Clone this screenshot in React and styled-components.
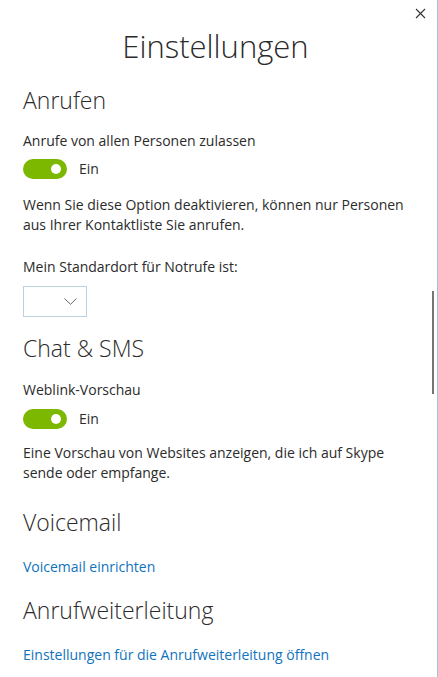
import React from "react";
import styled, { createGlobalStyle } from "styled-components";

const Global = createGlobalStyle`
  html, body { margin: 0; padding: 0; background: #fff; }
  body { font-family: "Open Sans", "Noto Sans", sans-serif; color: #2b2b2b; }
`;

const Window = styled.div`
  position: relative;
  width: 438px;
  height: 677px;
  box-sizing: border-box;
  border-right: 1px solid #a9c1d6;
  overflow: hidden;
  background: #fff;
`;

const Content = styled.div`
  display: flex;
  flex-direction: column;
  align-items: flex-start;
  padding: 26px 23px 0 23px;
`;

const Title = styled.h1`
  align-self: stretch;
  margin: 0;
  text-align: center;
  font-size: 31px;
  font-weight: 300;
  line-height: 40px;
  color: #2b2b2b;
  padding-right: 6px;
`;

const Heading = styled.h2`
  margin: ${(p) => p.$top}px 0 0 0;
  font-size: 23px;
  font-weight: 300;
  line-height: 32px;
  color: #2b2b2b;
`;

const Label = styled.div`
  margin-top: ${(p) => p.$top}px;
  font-size: 14px;
  line-height: 20px;
  color: #2b2b2b;
`;

const Paragraph = styled.p`
  margin: ${(p) => p.$top}px 0 0 0;
  font-size: 14px;
  line-height: 20px;
  color: #2b2b2b;
  max-width: 390px;
`;

const Link = styled.a`
  margin-top: ${(p) => p.$top}px;
  font-size: 14px;
  line-height: 20px;
  color: #0f73bd;
  text-decoration: none;
  cursor: pointer;
`;

const ToggleRow = styled.div`
  display: flex;
  align-items: center;
  gap: 12px;
  margin-top: ${(p) => p.$top}px;
  font-size: 14px;
  line-height: 20px;
`;

const Track = styled.span`
  display: flex;
  align-items: center;
  justify-content: flex-end;
  box-sizing: border-box;
  width: 44px;
  height: 20px;
  border-radius: 10px;
  background: #7db800;
  padding-right: 6px;
`;

const Knob = styled.span`
  width: 10px;
  height: 10px;
  border-radius: 50%;
  background: #fff;
`;

const Select = styled.div`
  display: flex;
  align-items: center;
  justify-content: flex-end;
  box-sizing: border-box;
  margin-top: ${(p) => p.$top}px;
  width: 64px;
  height: 31px;
  border: 1px solid #bdd0de;
  padding-right: 9px;
`;

const CloseButton = styled.button`
  position: absolute;
  top: 6px;
  right: 10px;
  width: 14px;
  height: 14px;
  padding: 0;
  border: 0;
  background: transparent;
  display: flex;
  align-items: center;
  justify-content: center;
`;

const Scrollbar = styled.div`
  position: absolute;
  right: 3px;
  top: 291px;
  width: 2px;
  height: 103px;
  background: #767676;
`;

const Toggle = () => (
  <Track>
    <Knob />
  </Track>
);

export default function App() {
  return (
    <Window>
      <Global />
      <CloseButton aria-label="Schließen">
        <svg width="11" height="11" viewBox="0 0 11 11">
          <path d="M1 1 L10 10 M10 1 L1 10" stroke="#333" strokeWidth="1.1" fill="none" />
        </svg>
      </CloseButton>
      <Scrollbar />
      <Content>
        <Title>Einstellungen</Title>

        <Heading $top={18}>Anrufen</Heading>
        <Label $top={15}>Anrufe von allen Personen zulassen</Label>
        <ToggleRow $top={8}>
          <Toggle />
          <span>Ein</span>
        </ToggleRow>
        <Paragraph $top={16}>
          Wenn Sie diese Option deaktivieren, können nur Personen aus Ihrer Kontaktliste Sie anrufen.
        </Paragraph>
        <Label $top={22}>Mein Standardort für Notrufe ist:</Label>
        <Select $top={9}>
          <svg width="13" height="7" viewBox="0 0 13 7">
            <path d="M0.5 0.5 L6.5 6.3 L12.5 0.5" stroke="#666" strokeWidth="1" fill="none" />
          </svg>
        </Select>

        <Heading $top={15}>Chat &amp; SMS</Heading>
        <Label $top={16}>Weblink-Vorschau</Label>
        <ToggleRow $top={9}>
          <Toggle />
          <span>Ein</span>
        </ToggleRow>
        <Paragraph $top={14}>
          Eine Vorschau von Websites anzeigen, die ich auf Skype sende oder empfange.
        </Paragraph>

        <Heading $top={23}>Voicemail</Heading>
        <Link $top={19}>Voicemail einrichten</Link>

        <Heading $top={17}>Anrufweiterleitung</Heading>
        <Link $top={19}>Einstellungen für die Anrufweiterleitung öffnen</Link>
      </Content>
    </Window>
  );
}
